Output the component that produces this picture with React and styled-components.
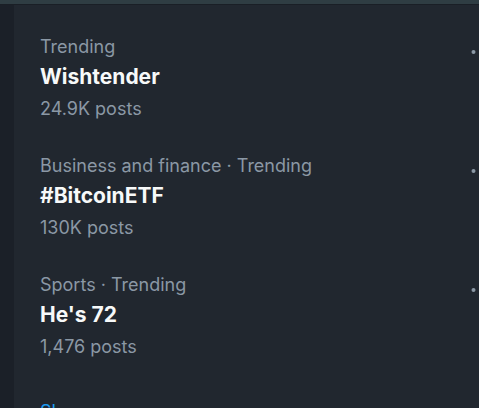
import React from 'react'
import styled, { createGlobalStyle } from 'styled-components'

const Global = createGlobalStyle`
  html, body {
    margin: 0;
    padding: 0;
    background: #21272f;
    overflow: hidden;
  }
  body {
    font-family: Inter, "Noto Sans", sans-serif;
  }
`

const trends = [
  { meta: 'Trending', title: 'Wishtender', posts: '24.9K posts' },
  { meta: 'Business and finance · Trending', title: '#BitcoinETF', posts: '130K posts' },
  { meta: 'Sports · Trending', title: "He's 72", posts: '1,476 posts' },
]

function MoreIcon() {
  return (
    <svg width="20" height="20" viewBox="0 0 24 24" fill="#8b98a5">
      <circle cx="3" cy="12" r="2.4" />
      <circle cx="12" cy="12" r="2.4" />
      <circle cx="21" cy="12" r="2.4" />
    </svg>
  )
}

export default function App() {
  return (
    <>
      <Global />
      <Page>
        <TopStrip />
        <Body>
          <Gutter />
          <Panel>
            {trends.map((t) => (
              <Trend key={t.title}>
                <TrendText>
                  <Meta>{t.meta}</Meta>
                  <Title>{t.title}</Title>
                  <Posts>{t.posts}</Posts>
                </TrendText>
                <More>
                  <MoreIcon />
                </More>
              </Trend>
            ))}
            <ShowMore>Show more</ShowMore>
          </Panel>
        </Body>
      </Page>
    </>
  )
}

const Page = styled.div`
  width: 479px;
  height: 408px;
  display: flex;
  flex-direction: column;
  overflow: hidden;
`

const TopStrip = styled.div`
  height: 4px;
  background: #2f3d43;
  border-bottom: 1px solid #1a1f26;
  flex-shrink: 0;
`

const Body = styled.div`
  flex: 1;
  display: flex;
`

const Gutter = styled.div`
  width: 14px;
  background: #1b2028;
  flex-shrink: 0;
`

const Panel = styled.div`
  flex: 1;
  padding-top: 30px;
  display: flex;
  flex-direction: column;
`

const Trend = styled.div`
  display: flex;
  justify-content: space-between;
  padding: 0 0 0 26px;
  height: 119px;
`

const TrendText = styled.div`
  display: flex;
  flex-direction: column;
`

const Meta = styled.div`
  font-size: 18px;
  line-height: 24px;
  color: #8b98a5;
`

const Title = styled.div`
  margin-top: 4px;
  font-size: 21px;
  line-height: 28px;
  font-weight: 700;
  color: #f7f9f9;
`

const Posts = styled.div`
  margin-top: 6px;
  font-size: 18px;
  line-height: 24px;
  color: #8b98a5;
`

const More = styled.div`
  margin-top: 7px;
  margin-right: -12px;
  height: 20px;
  display: flex;
`

const ShowMore = styled.div`
  padding-left: 26px;
  margin-top: 8px;
  font-size: 18px;
  line-height: 24px;
  color: #1d9bf0;
`
